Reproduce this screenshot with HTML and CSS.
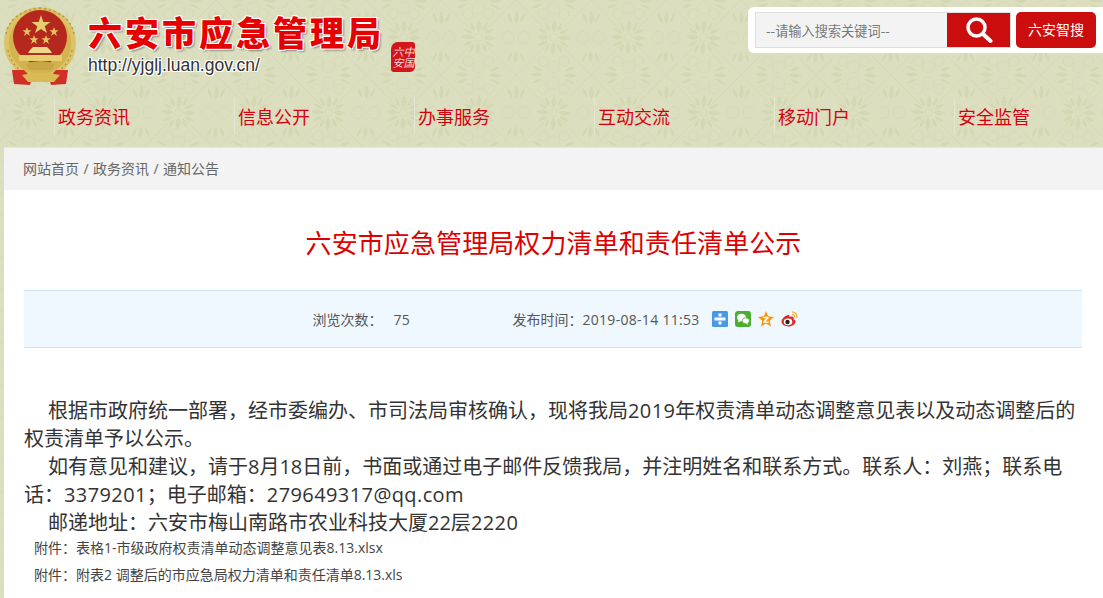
FILE: index.html
```html
<!DOCTYPE html>
<html lang="zh-CN">

<head>
    <meta charset="UTF-8">
    <title>六安市应急管理局权力清单和责任清单公示</title>
    <link rel="stylesheet" href="styles.css">
</head>

<body>

    <div class="header">
        <div class="top-row">
            <svg class="emblem" width="82" height="88" viewBox="0 0 82 88">
                <circle cx="40" cy="43" r="33.500" fill="#d3b34f" stroke="#dcc368" stroke-width="5"/>
                <path d="M6 34 Q10 12 40 8 Q70 12 74 34" fill="none" stroke="#b8963a" stroke-width="1.500" stroke-dasharray="2 3"/>
                <path d="M8 50 Q12 68 26 73 M72 50 Q68 68 54 73" fill="none" stroke="#b8963a" stroke-width="1.500" stroke-dasharray="2 3"/>
                <circle cx="40" cy="37" r="27" fill="#b5281e"/>
                <path d="M41 15 L43.300 22 L50.500 22 L44.700 26.300 L47 33 L41 29 L35 33 L37.300 26.300 L31.500 22 L38.700 22 Z" fill="#e8cd6c"/>
                <path d="M27 27 L28.200 30.300 L31.500 30.300 L28.800 32.400 L30 36 L27 33.800 L24 36 L25.200 32.400 L22.500 30.300 L25.800 30.300 Z" fill="#e2c45f"/>
                <path d="M54 27 L55.200 30.300 L58.500 30.300 L55.800 32.400 L57 36 L54 33.800 L51 36 L52.200 32.400 L49.500 30.300 L52.800 30.300 Z" fill="#e2c45f"/>
                <path d="M34 35 L35.200 38.300 L38.500 38.300 L35.800 40.400 L37 44 L34 41.800 L31 44 L32.200 40.400 L29.500 38.300 L32.800 38.300 Z" fill="#e2c45f"/>
                <path d="M46 35 L47.200 38.300 L50.500 38.300 L47.800 40.400 L49 44 L46 41.800 L43 44 L44.200 40.400 L41.500 38.300 L44.800 38.300 Z" fill="#e2c45f"/>
                <path d="M30 50 L33 47 L47 47 L50 50 L52 53 L28 53 Z" fill="#edd98c"/>
                <rect x="29" y="53" width="22" height="2" fill="#a8331f"/>
                <rect x="19" y="55" width="43" height="6" fill="#e6cd70"/>
                <path d="M26 64 Q40 58 55 64 L52 70 L29 70 Z" fill="#c9a544"/>
                <path d="M12 70 L24 70 L32 78 L30 85 L14 84 Z" fill="#cf2f26"/>
                <path d="M68 70 L56 70 L49 78 L51 85 L66 84 Z" fill="#cf2f26"/>
                <path d="M22 75 Q40 70 60 75 L54 82 L28 82 Z" fill="#d8bb55"/>
            </svg>
            <div class="site-name">
                <div class="site-title">六安市应急管理局</div>
                <div class="site-url">http://yjglj.luan.gov.cn/</div>
            </div>
            <div class="seal">中国六安</div>
            <div class="search-box">
                <div class="search-input">
                    <span class="search-hint">--请输入搜索关键词--</span>
                    <span class="search-btn">
                        <svg width="28" height="28" viewBox="0 0 28 28">
                            <circle cx="11.500" cy="11.500" r="8.500" fill="none" stroke="#fff" stroke-width="3.500"/>
                            <path d="M18 18 L25.500 25" stroke="#fff" stroke-width="4" stroke-linecap="round"/>
                        </svg>
                    </span>
                </div>
                <span class="smart-btn">六安智搜</span>
            </div>
        </div>
        <div class="nav">
            <a class="nav-item">政务资讯</a>
            <a class="nav-item">信息公开</a>
            <a class="nav-item">办事服务</a>
            <a class="nav-item">互动交流</a>
            <a class="nav-item">移动门户</a>
            <a class="nav-item">安全监管</a>
        </div>
    </div>

    <div class="main">
        <div class="crumbs">网站首页 / 政务资讯 / 通知公告</div>
        <h1 class="article-title">六安市应急管理局权力清单和责任清单公示</h1>
        <div class="info-bar">
            <span class="views">浏览次数：<b>75</b></span>
            <span class="date">发布时间：<b>2019-08-14 11:53</b></span>
            <span class="share">
                <svg width="16" height="16" viewBox="0 0 16 16">
                    <rect width="16" height="16" rx="1.500" fill="#4a98e8"/>
                    <path d="M6.500 2.500h3v3h-3zM2.500 6.500h11v3h-11zM6.500 10.500h3v3h-3z" fill="#fff"/>
                </svg>
                <svg width="16" height="16" viewBox="0 0 16 16">
                    <rect width="16" height="16" rx="3" fill="#4cae2f"/>
                    <ellipse cx="6.500" cy="6.500" rx="4.500" ry="3.800" fill="#fff"/>
                    <path d="M3.500 9 L3 11.500 L6 10 Z" fill="#fff"/>
                    <ellipse cx="10.800" cy="9.800" rx="3.600" ry="3" fill="#fff" stroke="#4cae2f" stroke-width="0.800"/>
                    <path d="M12.500 12 L13 13.800 L10.800 12.500 Z" fill="#fff"/>
                </svg>
                <svg width="16" height="16" viewBox="0 0 16 16">
                    <path d="M8 0 L10.300 5.200 L16 5.900 L11.800 9.700 L13 15.500 L8 12.600 L3 15.500 L4.200 9.700 L0 5.900 L5.700 5.200 Z" fill="#f59a12"/>
                    <path d="M5.500 5.800h5v1.400l-3 3.300h3.200v1.300h-5.400v-1.300l3-3.300h-2.800z" fill="#fff"/>
                </svg>
                <svg width="17" height="16" viewBox="0 0 17 16">
                    <path d="M7 4 C3.500 5 0.500 8 0.500 10.800 C0.500 13.800 4 15.500 7.500 15.500 C11.500 15.500 14.500 13 14.500 10.500 C14.500 9 13.300 8.400 12.500 8.200 C13 6.800 12.500 5.600 10.800 5.500 C9.800 5.500 9 5.800 8.600 6 C8.800 4.500 8.400 3.600 7 4 Z" fill="#dd2a2a"/>
                    <ellipse cx="7" cy="10.800" rx="4.300" ry="3.400" fill="#fff"/>
                    <circle cx="6.500" cy="11" r="2.200" fill="#222"/>
                    <path d="M11 1 C14 0.800 16.500 3.500 15.800 6.800 M11 3.500 C12.500 3.300 13.800 4.600 13.400 6.200" fill="none" stroke="#f0a020" stroke-width="1.200"/>
                </svg>
            </span>
        </div>
        <div class="article-body">
            <p>根据市政府统一部署，经市委编办、市司法局审核确认，现将我局<span class="num">2019</span>年权责清单动态调整意见表以及动态调整后的权责清单予以公示。</p>
            <p>如有意见和建议，请于8月18日前，书面或通过电子邮件反馈我局，并注明姓名和联系方式。联系人：刘燕；联系电话：<span class="num">3379201</span>；电子邮箱：<span class="num">279649317@qq.com</span></p>
            <p>邮递地址：六安市梅山南路市农业科技大厦22层<span class="num">2220</span></p>
        </div>
        <div class="attach">附件：表格1-市级政府权责清单动态调整意见表8.13.xlsx</div>
        <div class="attach">附件：附表2 调整后的市应急局权力清单和责任清单8.13.xls</div>
    </div>

</body>

</html>
```
FILE: styles.css
```css
html, body {
    margin: 0;
    height: 100%;
}

body {
    font-family: "Open Sans", "Noto Sans CJK SC", sans-serif;
    color: #333;
    overflow: hidden;
    background-color: #dcdfbf;
    background-position: -9.500px 0;
    background-image: url("data:image/svg+xml,%3Csvg xmlns='http://www.w3.org/2000/svg' xmlns:xlink='http://www.w3.org/1999/xlink' width='75' height='75' viewBox='0 0 75 75'%3E%3Cdefs%3E%3Cpath id='d' d='M0 0 Q5 -5 1 -13 Q-4 -6 0 0Z M-4 -1 Q-9 -5 -8 -11 Q-3 -7 -4 -1Z M4 -1 Q9 -5 9 -11 Q4 -7 4 -1Z'/%3E%3C/defs%3E%3Cg fill='none' stroke='%23d5d9b7' stroke-width='1'%3E%3Ccircle cx='37.500' cy='37.500' r='4'/%3E%3Ccircle cx='37.500' cy='37.500' r='11'/%3E%3Ccircle cx='37.500' cy='8' r='6'/%3E%3Ccircle cx='37.500' cy='67' r='6'/%3E%3Ccircle cx='8' cy='37.500' r='6'/%3E%3Ccircle cx='67' cy='37.500' r='6'/%3E%3Ccircle cx='27' cy='14' r='5'/%3E%3Ccircle cx='48' cy='14' r='5'/%3E%3Ccircle cx='27' cy='61' r='5'/%3E%3Ccircle cx='48' cy='61' r='5'/%3E%3Cpath d='M0 0 L30 30 M75 0 L45 30 M0 75 L30 45 M75 75 L45 45'/%3E%3C/g%3E%3Cg fill='%23d3d7b3'%3E%3Cuse xlink:href='%23d' transform='translate(37.500 33)'/%3E%3Cuse xlink:href='%23d' transform='translate(37.500 42) rotate(180)'/%3E%3Cuse xlink:href='%23d' transform='translate(33 37.500) rotate(-90)'/%3E%3Cuse xlink:href='%23d' transform='translate(42 37.500) rotate(90)'/%3E%3Cuse xlink:href='%23d' transform='translate(0 24)'/%3E%3Cuse xlink:href='%23d' transform='translate(75 24)'/%3E%3Cuse xlink:href='%23d' transform='translate(0 51) rotate(180)'/%3E%3Cuse xlink:href='%23d' transform='translate(75 51) rotate(180)'/%3E%3Cuse xlink:href='%23d' transform='translate(27 0) rotate(-90)'/%3E%3Cuse xlink:href='%23d' transform='translate(48 0) rotate(90)'/%3E%3Cuse xlink:href='%23d' transform='translate(27 75) rotate(-90)'/%3E%3Cuse xlink:href='%23d' transform='translate(48 75) rotate(90)'/%3E%3C/g%3E%3C/svg%3E");
}

.header {
    height: 147px;
}

.top-row {
    display: flex;
    align-items: flex-start;
    height: 98px;
}

.emblem {
    flex: none;
}

.site-name {
    margin: 9px 0 0 6px;
    width: 303px;
}

.site-title {
    font-family: "Noto Sans CJK SC", sans-serif;
    font-size: 34px;
    font-weight: 900;
    line-height: 46px;
    letter-spacing: 3px;
    color: #e60000;
    text-shadow: 1px 1px 0 #fff, -1px -1px 0 #fff, 1px -1px 0 #fff, -1px 1px 0 #fff, 2px 2px 2px #888;
}

.site-url {
    font-family: "Liberation Sans", sans-serif;
    font-size: 17.500px;
    line-height: 20px;
    color: #333;
    text-shadow: 1px 1px 0 #fff, -1px -1px 0 #fff, 1px -1px 0 #fff, -1px 1px 0 #fff;
}

.seal {
    margin-top: 42px;
    width: 24px;
    height: 30px;
    box-sizing: border-box;
    padding-right: 1px;
    border-radius: 7px 3px 5px 3px;
    background: #d4161c;
    color: #f6d9d9;
    font-family: "Noto Sans CJK SC", sans-serif;
    font-size: 11px;
    line-height: 11px;
    font-style: italic;
    text-align: center;
    writing-mode: vertical-rl;
}

.search-box {
    margin: 7px 0 0 auto;
    flex: none;
    width: 355px;
    height: 46px;
    padding: 5px 7px;
    box-sizing: border-box;
    background: #fff;
    border-radius: 6px 0 0 6px;
    display: flex;
    gap: 5px;
}

.search-input {
    width: 256px;
    height: 36px;
    box-sizing: border-box;
    background: #f3f3f3;
    border: 1px solid #ddd;
    display: flex;
    justify-content: space-between;
    align-items: center;
}

.search-hint {
    margin-left: 10px;
    font-family: "Noto Sans CJK SC", sans-serif;
    font-size: 13.200px;
    color: #777;
}

.search-btn {
    width: 63px;
    height: 34px;
    background: #cc0d0d;
    display: flex;
    justify-content: center;
    align-items: center;
}

.smart-btn {
    width: 80px;
    height: 36px;
    line-height: 36px;
    border-radius: 5px;
    background: #cc0d0d;
    color: #fff;
    font-size: 14px;
    text-align: center;
}

.nav {
    display: flex;
    padding-left: 54px;
}

.nav-item {
    flex: none;
    width: 180px;
    box-sizing: border-box;
    padding-left: 3px;
    height: 36px;
    line-height: 38px;
    font-size: 18px;
    color: #d8000f;
    border-left: 1px solid #e4e6cf;
}

.main {
    margin-left: 4px;
    height: 451px;
    background: #fff;
    border-top: 1px solid #e6e6e6;
    box-sizing: border-box;
    overflow: hidden;
}

.crumbs {
    height: 42px;
    line-height: 42px;
    padding-left: 19px;
    background: #f3f3f3;
    font-size: 14px;
    word-spacing: 0.800px;
    color: #666;
}

.article-title {
    margin: 0;
    height: 100px;
    line-height: 107px;
    font-size: 26px;
    font-weight: 400;
    letter-spacing: 0.100px;
    color: #dd0000;
    text-align: center;
}

.info-bar {
    margin: 0 21px 0 20px;
    padding-left: 4px;
    height: 58px;
    box-sizing: border-box;
    background: #eff8fe;
    border-top: 1px solid #cfe3ee;
    border-bottom: 1px solid #cfe3ee;
    display: flex;
    justify-content: center;
    align-items: center;
    font-size: 14px;
    color: #555;
}

.info-bar b {
    font-weight: 400;
    font-size: 14px;
    letter-spacing: 0.300px;
}

.views {
    width: 200px;
}

.views b {
    margin-left: 11px;
}

.date {
    margin-right: 12px;
}

.share {
    display: flex;
    gap: 7px;
    align-items: center;
}

.article-body {
    margin: 49px 20px 0;
    font-size: 20px;
    line-height: 28px;
    color: #333;
}

.article-body p {
    margin: 0;
    text-indent: 24px;
}

.num {
    letter-spacing: 0.400px;
}

.attach {
    margin-left: 30px;
    padding-bottom: 5px;
    font-size: 14px;
    line-height: 22px;
    color: #444;
}
```
